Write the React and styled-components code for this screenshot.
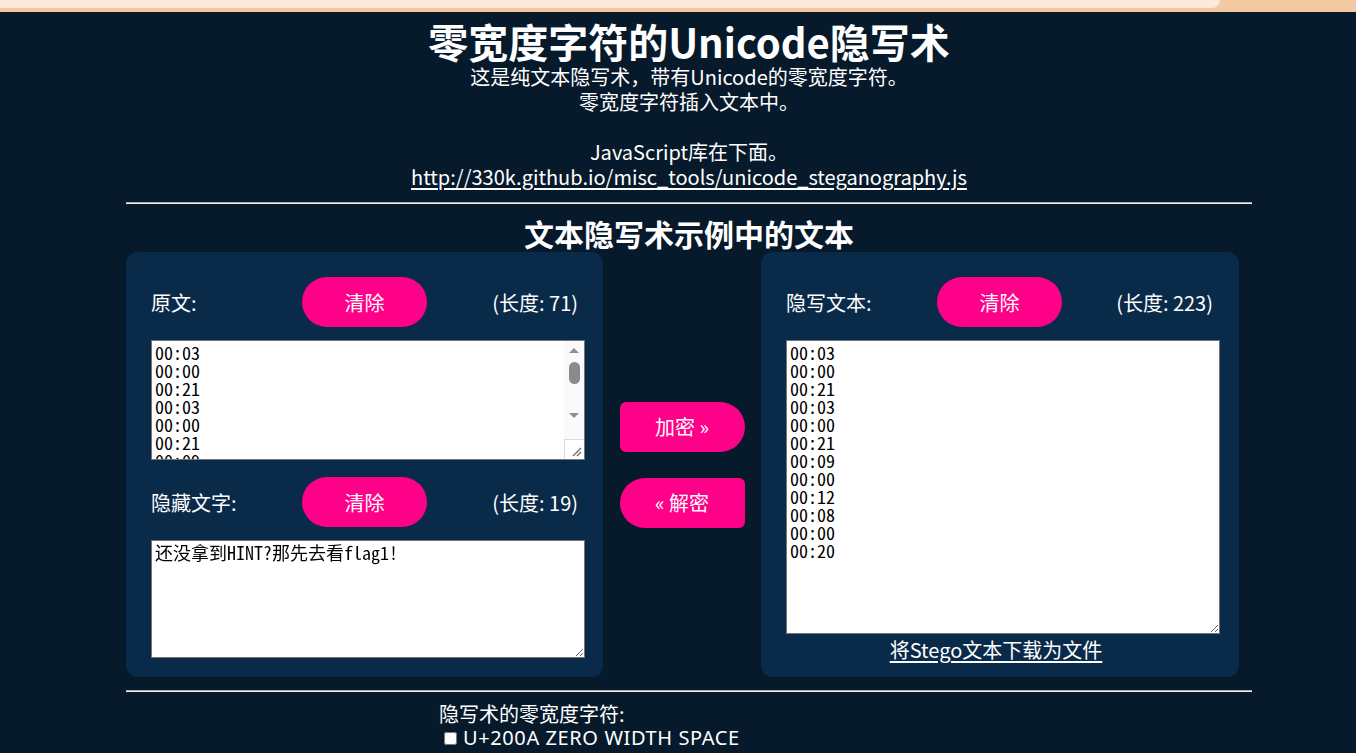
import React, { useState } from 'react';
import styled, { createGlobalStyle } from 'styled-components';

const GlobalStyle = createGlobalStyle`
  html, body { margin: 0; padding: 0; background: #071a2c; }
  body {
    font-family: "Noto Sans CJK SC", sans-serif;
    color: #ffffff;
    font-size: 20px;
  }
`;

const TopBar = styled.div`
  height: 12px;
  background: #f4c9a1;
`;

const TopBarInner = styled.div`
  width: calc(100% - 136px);
  height: 8px;
  background: #fce9da;
  border-bottom-right-radius: 10px;
`;

const Page = styled.div`
  padding: 0 104px 0 126px;
  text-align: center;
`;

const Title = styled.h1`
  margin: 6px 0 0;
  font-size: 40px;
  line-height: 46px;
  font-weight: 700;
`;

const Intro = styled.p`
  margin: 0;
  font-size: 20px;
  line-height: 25px;
`;

const Link = styled.a`
  color: #ffffff;
  text-decoration: underline;
  text-underline-offset: 3px;
`;

const Rule = styled.hr`
  margin: ${p => p.$mt}px 0 ${p => p.$mb}px;
  border: 0;
  border-top: 1px solid #a9a9a9;
  border-bottom: 1px solid #eeeeee;
  height: 0;
`;

const SubTitle = styled.h2`
  margin: 0;
  font-size: 30px;
  line-height: 38px;
  font-weight: 700;
`;

const Workspace = styled.div`
  display: grid;
  grid-template-columns: 477px 158px 478px;
  align-items: stretch;
  text-align: left;
`;

const Panel = styled.div`
  background: #0a2a4a;
  border-radius: 12px;
  padding: 25px ${p => p.$pr}px ${p => p.$pb}px 25px;
  display: flex;
  flex-direction: column;
`;

const Row = styled.div`
  display: grid;
  grid-template-columns: 1fr 125px 1fr;
  align-items: center;
  height: 50px;
  margin-right: 7px;
  margin-top: ${p => p.$mt || 0}px;
`;

const Label = styled.span`
  font-size: 20px;
  justify-self: start;
`;

const Length = styled.span`
  font-size: 20px;
  justify-self: end;
`;

const ClearButton = styled.button`
  width: 125px;
  height: 50px;
  border: none;
  border-radius: 25px;
  background: #ff0088;
  color: #ffffff;
  font-family: "Noto Sans CJK SC", sans-serif;
  font-size: 20px;
  cursor: pointer;
`;

const FieldWrap = styled.div`
  position: relative;
  width: 434px;
  height: ${p => p.$h}px;
  margin-top: 13px;
  flex: none;
`;

const TextArea = styled.textarea`
  box-sizing: border-box;
  width: 100%;
  height: 100%;
  margin: 0;
  padding: 2px 3px;
  border: 1px solid #767676;
  background: #ffffff;
  color: #000000;
  font-family: "Noto Sans Mono CJK SC", "Liberation Mono", monospace;
  font-size: 18px;
  line-height: 18px;
  display: block;
`;

const ScrollTrack = styled.div`
  position: absolute;
  top: 1px;
  right: 1px;
  bottom: 1px;
  width: 20px;
  background: #fafafa;
  display: flex;
  flex-direction: column;
  align-items: center;
  pointer-events: none;
`;

const Arrow = styled.div`
  width: 0;
  height: 0;
  margin-top: ${p => p.$mt}px;
  border-left: 5px solid transparent;
  border-right: 5px solid transparent;
  ${p => (p.$up ? 'border-bottom: 5px solid #8f8f8f;' : 'border-top: 5px solid #8f8f8f;')}
`;

const Thumb = styled.div`
  width: 11px;
  height: 22px;
  margin-top: 9px;
  border-radius: 6px;
  background: #8a8a8a;
`;

const Corner = styled.div`
  margin-top: auto;
  width: 20px;
  height: 20px;
  box-sizing: border-box;
  border-top: 1px solid #dcdcdc;
  border-left: 1px solid #dcdcdc;
  background: #ffffff;
  display: flex;
  align-items: flex-end;
  justify-content: flex-end;
`;

const Middle = styled.div`
  display: flex;
  flex-direction: column;
  align-items: center;
  justify-content: center;
  gap: 26px;
`;

const ActionButton = styled.button`
  width: 125px;
  height: 50px;
  border: none;
  background: #ff0088;
  color: #ffffff;
  font-family: "Noto Sans CJK SC", sans-serif;
  font-size: 20px;
  cursor: pointer;
  border-radius: ${p => (p.$dir === 'right' ? '6px 25px 25px 6px' : '25px 6px 6px 25px')};
`;

const Download = styled.a`
  display: block;
  margin: 3px 14px 0 0;
  text-align: center;
  color: #ffffff;
  font-size: 20px;
  line-height: 25px;
  text-decoration: underline;
  text-underline-offset: 3px;
`;

const Options = styled.div`
  width: 500px;
  margin: 0 auto;
  text-align: left;
  font-size: 20px;
  line-height: 24px;
`;

const OptionRow = styled.label`
  display: flex;
  align-items: center;
  gap: 6px;
  padding-left: 5px;
`;

const OptionText = styled.span`
  font-family: "Noto Sans", "Noto Sans CJK SC", sans-serif;
  font-size: 20px;
  letter-spacing: 0.6px;
`;

const Check = styled.input`
  margin: 0;
  width: 13px;
  height: 13px;
`;

const Grip = () => (
  <svg width="10" height="10" viewBox="0 0 10 10" style={{ marginRight: 2, marginBottom: 2 }}>
    <line x1="1" y1="9" x2="9" y2="1" stroke="#6b6b6b" strokeWidth="1.2" />
    <line x1="5" y1="9" x2="9" y2="5" stroke="#6b6b6b" strokeWidth="1.2" />
  </svg>
);

const lines = '00:03\n00:00\n00:21\n00:03\n00:00\n00:21\n00:09\n00:00\n00:12\n00:08\n00:00\n00:20';

export default function App() {
  const [orig] = useState(lines);
  const [hidden] = useState('还没拿到HINT?那先去看flag1!');
  const [stego] = useState(lines);
  return (
    <>
      <GlobalStyle />
      <TopBar><TopBarInner /></TopBar>
      <Page>
        <Title>零宽度字符的Unicode隐写术</Title>
        <Intro>这是纯文本隐写术，带有Unicode的零宽度字符。</Intro>
        <Intro>零宽度字符插入文本中。</Intro>
        <Intro>&nbsp;</Intro>
        <Intro>JavaScript库在下面。</Intro>
        <Intro>
          <Link href="#">http://330k.github.io/misc_tools/unicode_steganography.js</Link>
        </Intro>
        <Rule $mt={13} $mb={10} />
        <SubTitle>文本隐写术示例中的文本</SubTitle>
        <Workspace>
          <Panel $pr={18} $pb={19}>
            <Row>
              <Label>原文:</Label>
              <ClearButton>清除</ClearButton>
              <Length>(长度: 71)</Length>
            </Row>
            <FieldWrap $h={120}>
              <TextArea defaultValue={orig} />
              <ScrollTrack>
                <Arrow $up $mt={7} />
                <Thumb />
                <Arrow $mt={29} />
                <Corner><Grip /></Corner>
              </ScrollTrack>
            </FieldWrap>
            <Row $mt={17}>
              <Label>隐藏文字:</Label>
              <ClearButton>清除</ClearButton>
              <Length>(长度: 19)</Length>
            </Row>
            <FieldWrap $h={118}>
              <TextArea defaultValue={hidden} />
            </FieldWrap>
          </Panel>
          <Middle>
            <ActionButton $dir="right">加密 »</ActionButton>
            <ActionButton $dir="left">« 解密</ActionButton>
          </Middle>
          <Panel $pr={19} $pb={12}>
            <Row>
              <Label>隐写文本:</Label>
              <ClearButton>清除</ClearButton>
              <Length>(长度: 223)</Length>
            </Row>
            <FieldWrap $h={294}>
              <TextArea defaultValue={stego} />
            </FieldWrap>
            <Download href="#">将Stego文本下载为文件</Download>
          </Panel>
        </Workspace>
        <Rule $mt={13} $mb={10} />
        <Options>
          <div>隐写术的零宽度字符:</div>
          <OptionRow>
            <Check type="checkbox" />
            <OptionText>U+200A ZERO WIDTH SPACE</OptionText>
          </OptionRow>
        </Options>
      </Page>
    </>
  );
}
